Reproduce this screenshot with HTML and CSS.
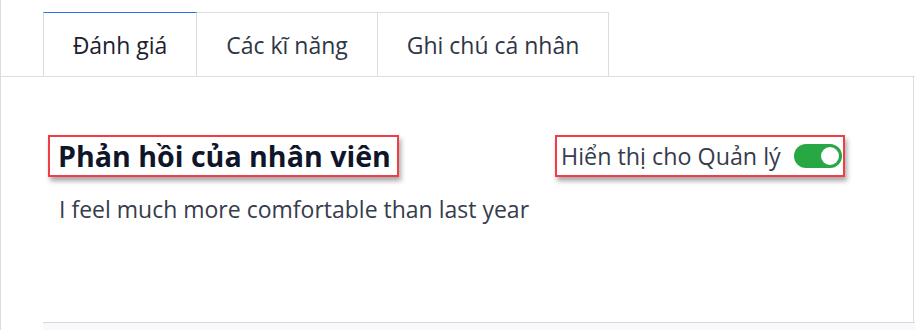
FILE: index.html
```html
<!DOCTYPE html>
<html lang="vi">
<head>
<meta charset="utf-8">
<link rel="stylesheet" href="styles.css">
</head>
<body>
<div class="page">
  <div class="tabs">
    <div class="tab active">Đánh giá</div>
    <div class="tab">Các kĩ năng</div>
    <div class="tab">Ghi chú cá nhân</div>
  </div>
  <div class="panel">
    <div class="head-row">
      <div class="hl title-box"><h2 class="title">Phản hồi của nhân viên</h2></div>
      <div class="hl toggle-box">
        <span class="toggle-label">Hiển thị cho Quản lý</span>
        <span class="switch"><span class="knob"></span></span>
      </div>
    </div>
    <p class="feedback">I feel much more comfortable than last year</p>
  </div>
  <div class="footer"></div>
</div>
</body>
</html>
```
FILE: styles.css
```css
html, body {
  margin: 0;
  padding: 0;
  background: #ffffff;
}
body {
  font-family: "Open Sans", "Noto Sans", "DejaVu Sans", sans-serif;
  color: #343a4a;
}
.page {
  width: 915px;
  height: 330px;
  box-sizing: border-box;
  border-left: 1px solid #dcdcdf;
  padding-top: 12px;
  overflow: hidden;
}
.tabs {
  display: flex;
  padding-left: 42px;
  border-bottom: 1px solid #dcdde0;
  width: 914px;
  box-sizing: border-box;
}
.tab {
  height: 64px;
  display: flex;
  align-items: center;
  justify-content: center;
  box-sizing: border-box;
  border: 1px solid #dcdde0;
  border-bottom: none;
  border-left: none;
  font-size: 23px;
  color: #2f3645;
  white-space: nowrap;
}
.tab:first-child {
  border-left: 1px solid #dcdde0;
}
.tab.active {
  border-top: 1px solid #2f6fed;
  color: #1c2130;
}
.tab:nth-child(1) { width: 154px; }
.tab:nth-child(2) { width: 181px; }
.tab:nth-child(3) { width: 231px; }
.panel {
  width: 913px;
  height: 245px;
  box-sizing: border-box;
  border-right: 1px solid #dcdde0;
  padding: 58px 68px 0 47px;
}
.head-row {
  display: flex;
  justify-content: space-between;
  align-items: flex-start;
}
.hl {
  border: 2px solid #ef3e46;
  box-shadow: 2px 4px 5px rgba(0, 0, 0, 0.35);
  box-sizing: border-box;
  height: 42px;
  display: flex;
  align-items: center;
}
.title-box {
  padding: 0 8px;
  width: 351px;
}
.title {
  margin: 0 0 2px;
  font-size: 28.6px;
  font-weight: 700;
  color: #10162a;
  white-space: nowrap;
}
.toggle-box {
  width: 290px;
  padding: 0 1px 0 4px;
  justify-content: space-between;
}
.toggle-label {
  font-size: 23.3px;
  color: #363c4c;
  white-space: nowrap;
}
.switch {
  width: 48px;
  height: 24px;
  border-radius: 12px;
  background: #28a745;
  display: flex;
  align-items: center;
  justify-content: flex-end;
  padding: 0 3px;
  box-sizing: border-box;
}
.knob {
  width: 18px;
  height: 18px;
  border-radius: 50%;
  background: #ffffff;
}
.feedback {
  margin: 16px 0 0 11px;
  font-size: 23px;
  color: #363c4c;
}
.footer {
  margin-left: 42px;
  width: 872px;
  height: 20px;
  border-top: 1px solid #d6d8dc;
  background: #f8f9fa;
}
```
